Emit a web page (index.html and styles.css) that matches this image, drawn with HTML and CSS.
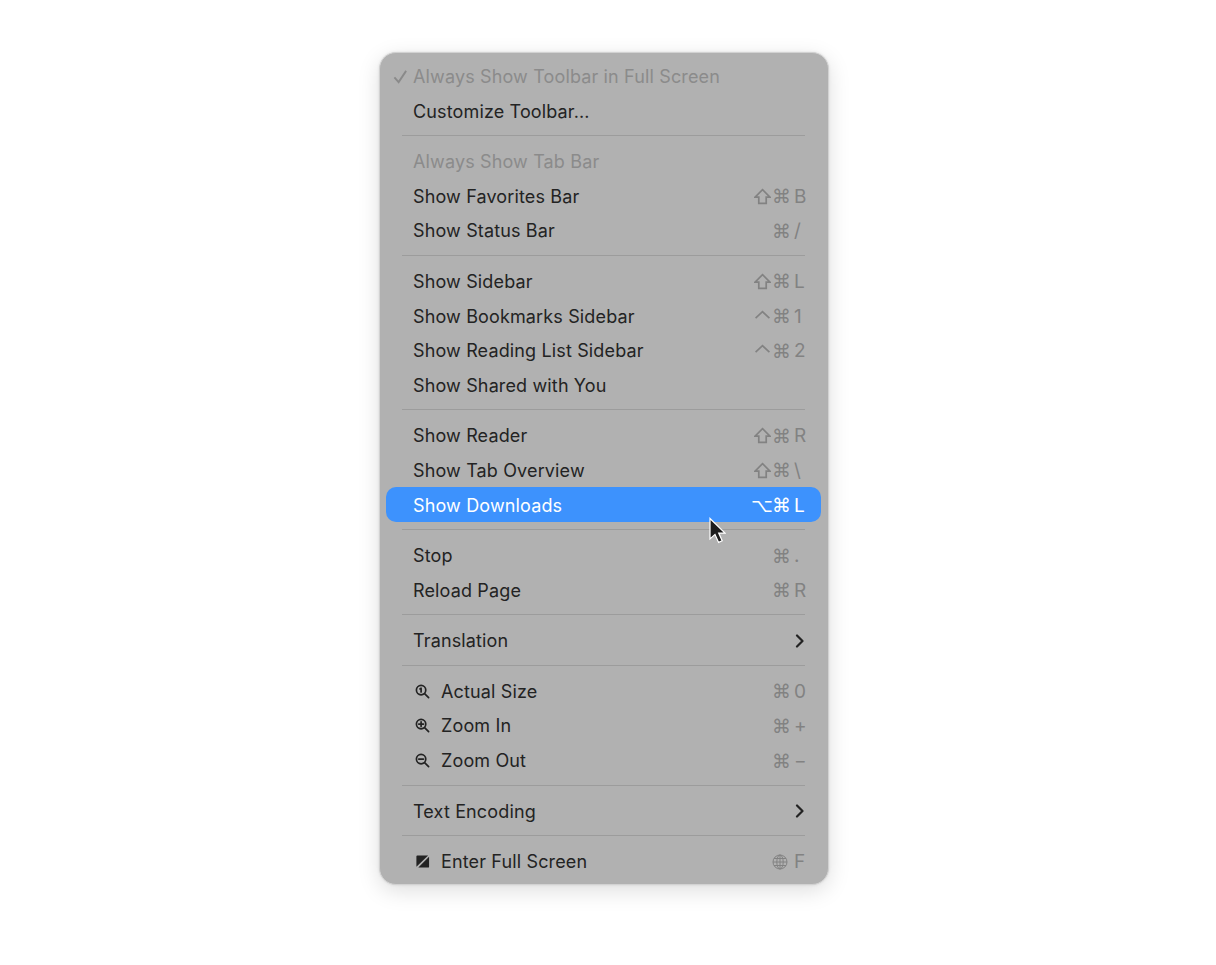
FILE: index.html
```html
<!DOCTYPE html>
<html lang="en">
<head>
    <meta charset="UTF-8">
    <meta name="viewport" content="width=device-width, initial-scale=1.0">
    <title>Safari View Menu</title>
    <link rel="stylesheet" href="styles.css">
</head>
<body>
    <!-- shared shapes for the modifier keys -->
    <svg class="defs" aria-hidden="true">
        <symbol id="shift" viewBox="0 0 16 16"><path d="M8 1.500 15 8.500H11.500V14.500H4.500V8.500H1Z"/></symbol>
        <symbol id="ctrl" viewBox="0 0 16 16"><path d="M1.500 9.500 8 3.500 14.500 9.500"/></symbol>
    </svg>

    <div class="menu">
        <div class="row disabled"><span class="mark"><svg class="check" viewBox="0 0 16 16"><path d="M1.500 9 6 14 14 2"/></svg></span><span class="label">Always Show Toolbar in Full Screen</span></div>
        <div class="row"><span class="mark"></span><span class="label">Customize Toolbar...</span></div>
        <div class="sep"></div>
        <div class="row disabled"><span class="mark"></span><span class="label">Always Show Tab Bar</span></div>
        <div class="row"><span class="mark"></span><span class="label">Show Favorites Bar</span><span class="keys"><i><svg class="mod"><use href="#shift"/></svg></i><i>⌘</i><b>B</b></span></div>
        <div class="row"><span class="mark"></span><span class="label">Show Status Bar</span><span class="keys"><i></i><i>⌘</i><b>/</b></span></div>
        <div class="sep"></div>
        <div class="row"><span class="mark"></span><span class="label">Show Sidebar</span><span class="keys"><i><svg class="mod"><use href="#shift"/></svg></i><i>⌘</i><b>L</b></span></div>
        <div class="row"><span class="mark"></span><span class="label">Show Bookmarks Sidebar</span><span class="keys"><i><svg class="mod"><use href="#ctrl"/></svg></i><i>⌘</i><b>1</b></span></div>
        <div class="row"><span class="mark"></span><span class="label">Show Reading List Sidebar</span><span class="keys"><i><svg class="mod"><use href="#ctrl"/></svg></i><i>⌘</i><b>2</b></span></div>
        <div class="row"><span class="mark"></span><span class="label">Show Shared with You</span></div>
        <div class="sep"></div>
        <div class="row"><span class="mark"></span><span class="label">Show Reader</span><span class="keys"><i><svg class="mod"><use href="#shift"/></svg></i><i>⌘</i><b>R</b></span></div>
        <div class="row"><span class="mark"></span><span class="label">Show Tab Overview</span><span class="keys"><i><svg class="mod"><use href="#shift"/></svg></i><i>⌘</i><b>\</b></span></div>
        <div class="row active"><span class="mark"></span><span class="label">Show Downloads</span><span class="keys"><i>⌥</i><i>⌘</i><b>L</b></span></div>
        <div class="sep"></div>
        <div class="row"><span class="mark"></span><span class="label">Stop</span><span class="keys"><i></i><i>⌘</i><b>.</b></span></div>
        <div class="row"><span class="mark"></span><span class="label">Reload Page</span><span class="keys"><i></i><i>⌘</i><b>R</b></span></div>
        <div class="sep"></div>
        <div class="row"><span class="mark"></span><span class="label">Translation</span>
            <svg class="chevron" viewBox="0 0 10 14"><path d="M2 1.500 7.500 7 2 12.500"/></svg>
        </div>
        <div class="sep"></div>
        <div class="row"><span class="mark"></span>
            <svg class="item-icon" viewBox="0 0 16 16"><circle cx="6.500" cy="6.500" r="5"/><path d="M10.200 10.200 14.500 14.500M6.500 4.500v4M5.300 5.300 6.500 4.500"/></svg>
            <span class="label">Actual Size</span><span class="keys"><i></i><i>⌘</i><b>0</b></span></div>
        <div class="row"><span class="mark"></span>
            <svg class="item-icon" viewBox="0 0 16 16"><circle cx="6.500" cy="6.500" r="5"/><path d="M10.200 10.200 14.500 14.500M4 6.500h5M6.500 4v5"/></svg>
            <span class="label">Zoom In</span><span class="keys"><i></i><i>⌘</i><b>+</b></span></div>
        <div class="row"><span class="mark"></span>
            <svg class="item-icon" viewBox="0 0 16 16"><circle cx="6.500" cy="6.500" r="5"/><path d="M10.200 10.200 14.500 14.500M4 6.500h5"/></svg>
            <span class="label">Zoom Out</span><span class="keys"><i></i><i>⌘</i><b>−</b></span></div>
        <div class="sep"></div>
        <div class="row"><span class="mark"></span><span class="label">Text Encoding</span>
            <svg class="chevron" viewBox="0 0 10 14"><path d="M2 1.500 7.500 7 2 12.500"/></svg>
        </div>
        <div class="sep"></div>
        <div class="row"><span class="mark"></span>
            <svg class="item-icon" viewBox="0 0 16 16"><path class="solid" d="M2.500 1.500H14L1.500 13.500V2.500a1 1 0 0 1 1-1ZM15 3v10.500a1 1 0 0 1-1 1H3.500Z"/></svg>
            <span class="label">Enter Full Screen</span>
            <span class="keys"><i></i><i><svg class="globe" viewBox="0 0 16 16"><circle cx="8" cy="8" r="7"/><ellipse cx="8" cy="8" rx="3.200" ry="7"/><path d="M1 8h14M2 4.500h12M2 11.500h12M8 1v14"/></svg></i><b>F</b></span></div>
    </div>

    <svg class="cursor" viewBox="0 0 18 28">
        <path d="M2 1.500V22l5-4.600 3.600 8 3.600-1.600-3.500-7.700H17Z"/>
    </svg>
</body>
</html>
```

FILE: styles.css
```css
body {
    margin: 0;
    background-color: #fff;
    font-family: Inter, "Liberation Sans", sans-serif;
    position: relative;
    height: 965px;
    overflow: hidden;
}

.defs {
    display: none;
}

.menu {
    box-sizing: border-box;
    width: 450px;
    height: 833px;
    margin: 52px 0 0 379px;
    padding: 5.5px 7px 0 6px;
    background-color: #b1b1b1;
    border: 1px solid #d2d2d2;
    border-radius: 17px;
    box-shadow: 0 6px 22px rgba(0, 0, 0, 0.13), 0 0 3px rgba(0, 0, 0, 0.1);
}

.row {
    box-sizing: border-box;
    display: flex;
    align-items: center;
    height: 34.6px;
    padding: 1.4px 15px 0 7px;
    font-size: 18px;
    letter-spacing: 0.14px;
    color: #232323;
    border-radius: 10px;
}

.mark {
    flex: none;
    width: 20px;
}

.check {
    display: block;
    width: 15px;
    height: 15px;
    fill: none;
    stroke: #8a8a8a;
    stroke-width: 2;
}

.label {
    flex: 1;
    white-space: nowrap;
}

.disabled {
    color: #8b8b8b;
}

.active {
    background-color: #3d92fd;
    color: #fff;
}

.sep {
    height: 1px;
    margin: 7.5px 16px 7.5px 16px;
    background-color: #9c9c9c;
}

.keys {
    display: flex;
    align-items: center;
    margin-right: 1px;
    color: #828282;
}

.active .keys {
    color: #fff;
}

.keys i {
    display: flex;
    justify-content: center;
    width: 20px;
    font-family: "DejaVu Sans", sans-serif;
    font-style: normal;
    font-size: 19px;
}

.keys i + i {
    width: 22px;
    justify-content: flex-start;
}

.keys b {
    width: 11px;
    font-size: 19px;
    font-weight: 400;
    letter-spacing: 0;
}

.mod {
    display: block;
    width: 17px;
    height: 17px;
    fill: none;
    stroke: #828282;
    stroke-width: 1.600;
}

.item-icon {
    flex: none;
    width: 15px;
    height: 15px;
    margin: 0 11px 0 2px;
    fill: none;
    stroke: #232323;
    stroke-width: 1.800;
    stroke-linecap: round;
}

.item-icon .solid {
    fill: #232323;
    stroke: none;
}

.chevron {
    width: 10px;
    height: 14px;
    margin-right: 1px;
    fill: none;
    stroke: #232323;
    stroke-width: 2.200;
    stroke-linecap: round;
    stroke-linejoin: round;
}

.globe {
    display: block;
    width: 16px;
    height: 16px;
    fill: none;
    stroke: #828282;
    stroke-width: 1;
}

.cursor {
    position: absolute;
    left: 708px;
    top: 517px;
    width: 18px;
    height: 28px;
    fill: #1c1c1c;
    stroke: #fff;
    stroke-width: 1.200;
}
```
